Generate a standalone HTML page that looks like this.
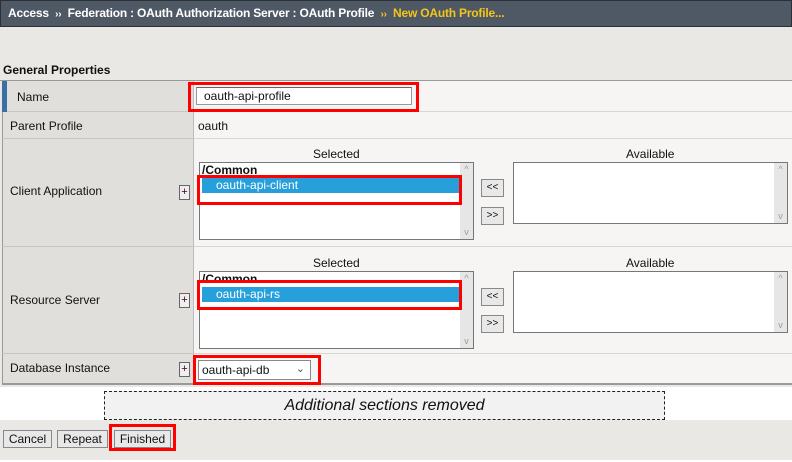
<!DOCTYPE html>
<html><head><meta charset="utf-8"><style>
*{margin:0;padding:0;box-sizing:border-box}
body{width:792px;height:462px;position:relative;overflow:hidden;background:#eae8e4;font-family:"Liberation Sans",Arial,sans-serif;font-size:12px;color:#111}
.a{position:absolute}
.hdr{left:0;top:0;width:792px;height:27px;background:#4f5966;border:1px solid #2c3036;color:#fff;font-weight:bold;font-size:12px;line-height:25px;padding-left:7px;white-space:nowrap;letter-spacing:-0.2px}
.hdr .y{color:#f5c518}
.lab{background:#e0dfdb;border-left:1px solid #999;border-right:1px solid #bbb;border-bottom:1px solid #c8c6c2}
.val{background:#f6f5f3;border-bottom:1px solid #d8d6d2}
.t{font-size:12px}
.plus{width:11px;height:15px;border:1px solid #666;background:#eee;font-size:11px;line-height:13px;text-align:center;color:#402}
.lb{background:#fff;border:1px solid #777}
.sb{background:#e6e6e6;width:13px;top:0;bottom:0;right:0;color:#999;font-size:9px;text-align:center}
.red{border:3px solid #f00}
.btn{background:#e8e8e8;border:1px solid #888;font-size:12px;text-align:center;line-height:16px}
.ab{width:23px;height:18px;border:1px solid #888;background:#e8e8e8;font-size:10px;text-align:center;line-height:16px}
</style></head><body>
<div class="a hdr">Access&nbsp; <span style="font-size:10px">››</span>&nbsp; Federation : OAuth Authorization Server : OAuth Profile&nbsp; <span class="y"><span style="font-size:10px">››</span>&nbsp; New OAuth Profile...</span></div>
<div class="a" style="left:3px;top:63px;font-weight:bold;font-size:12px">General Properties</div>
<div class="a" style="left:0;top:80px;width:792px;height:1px;background:#999"></div>
<div class="a lab" style="left:2px;top:81px;width:192px;height:31px"></div>
<div class="a" style="left:2px;top:81px;width:5px;height:31px;background:#3a6ea5"></div>
<div class="a t" style="left:17px;top:90px">Name</div>
<div class="a val" style="left:194px;top:81px;width:598px;height:31px"></div>
<div class="a lab" style="left:2px;top:112px;width:192px;height:27px"></div>
<div class="a t" style="left:10px;top:119px">Parent Profile</div>
<div class="a val" style="left:194px;top:112px;width:598px;height:27px"></div>
<div class="a t" style="left:198px;top:119px">oauth</div>
<div class="a lab" style="left:2px;top:139px;width:192px;height:108px"></div>
<div class="a t" style="left:10px;top:184px">Client Application</div>
<div class="a plus" style="left:179px;top:185px">+</div>
<div class="a val" style="left:194px;top:139px;width:598px;height:108px"></div>
<div class="a lab" style="left:2px;top:247px;width:192px;height:107px"></div>
<div class="a t" style="left:10px;top:293px">Resource Server</div>
<div class="a plus" style="left:179px;top:293px">+</div>
<div class="a val" style="left:194px;top:247px;width:598px;height:107px"></div>
<div class="a lab" style="left:2px;top:354px;width:192px;height:31px;border-bottom:2px solid #999"></div>
<div class="a t" style="left:10px;top:361px">Database Instance</div>
<div class="a plus" style="left:179px;top:362px">+</div>
<div class="a val" style="left:194px;top:354px;width:598px;height:31px;border-bottom:2px solid #999"></div>
<div class="a red" style="left:188px;top:82px;width:231px;height:30px"></div>
<div class="a" style="left:196px;top:87px;width:216px;height:18px;background:#fff;border:1px solid #999;border-top-color:#666;padding-left:7px;line-height:17px">oauth-api-profile</div>
<div class="a t" style="left:313px;top:147px">Selected</div>
<div class="a lb" style="left:199px;top:162px;width:275px;height:78px">
 <div class="a" style="left:2px;top:0;font-weight:bold;font-size:12px">/Common</div>
 <div class="a" style="left:2px;top:15px;width:258px;height:15px;background:#279fda;color:#fff;padding-left:14px;line-height:15px">oauth-api-client</div>
 <div class="a sb"><div style="margin-top:1px">^</div><div style="position:absolute;bottom:2px;width:13px">v</div></div>
</div>
<div class="a red" style="left:197px;top:175px;width:265px;height:30px"></div>
<div class="a ab" style="left:481px;top:179px">&lt;&lt;</div>
<div class="a ab" style="left:481px;top:207px">&gt;&gt;</div>
<div class="a t" style="left:626px;top:147px">Available</div>
<div class="a lb" style="left:513px;top:162px;width:275px;height:62px"><div class="a sb"><div style="margin-top:1px">^</div><div style="position:absolute;bottom:2px;width:13px">v</div></div></div>
<div class="a t" style="left:313px;top:256px">Selected</div>
<div class="a lb" style="left:199px;top:271px;width:275px;height:78px">
 <div class="a" style="left:2px;top:0;font-weight:bold;font-size:12px">/Common</div>
 <div class="a" style="left:2px;top:15px;width:258px;height:15px;background:#279fda;color:#fff;padding-left:14px;line-height:15px">oauth-api-rs</div>
 <div class="a sb"><div style="margin-top:1px">^</div><div style="position:absolute;bottom:2px;width:13px">v</div></div>
</div>
<div class="a red" style="left:197px;top:280px;width:265px;height:30px"></div>
<div class="a ab" style="left:481px;top:288px">&lt;&lt;</div>
<div class="a ab" style="left:481px;top:315px">&gt;&gt;</div>
<div class="a t" style="left:626px;top:256px">Available</div>
<div class="a lb" style="left:513px;top:271px;width:275px;height:62px"><div class="a sb"><div style="margin-top:1px">^</div><div style="position:absolute;bottom:2px;width:13px">v</div></div></div>
<div class="a red" style="left:193px;top:355px;width:128px;height:30px"></div>
<div class="a" style="left:198px;top:360px;width:113px;height:20px;background:#fff;border:1px solid #888;line-height:18px;padding-left:3px">oauth-api-db<span style="position:absolute;right:5px;top:-1px;color:#555;font-size:11px">&#8964;</span></div>
<div class="a" style="left:0;top:387px;width:792px;height:33px;background:#fff"></div>
<div class="a" style="left:104px;top:391px;width:561px;height:29px;background:#f2f2f2;border:1px dashed #222;text-align:center;font-style:italic;font-size:16px;line-height:27px;font-family:'Liberation Sans',sans-serif">Additional sections removed</div>
<div class="a btn" style="left:3px;top:430px;width:49px;height:18px">Cancel</div>
<div class="a btn" style="left:57px;top:430px;width:51px;height:18px">Repeat</div>
<div class="a red" style="left:109px;top:424px;width:67px;height:27px"></div>
<div class="a btn" style="left:114px;top:430px;width:57px;height:18px">Finished</div>
<div class="a" style="left:0;top:460px;width:792px;height:2px;background:#fff"></div>
</body></html>
